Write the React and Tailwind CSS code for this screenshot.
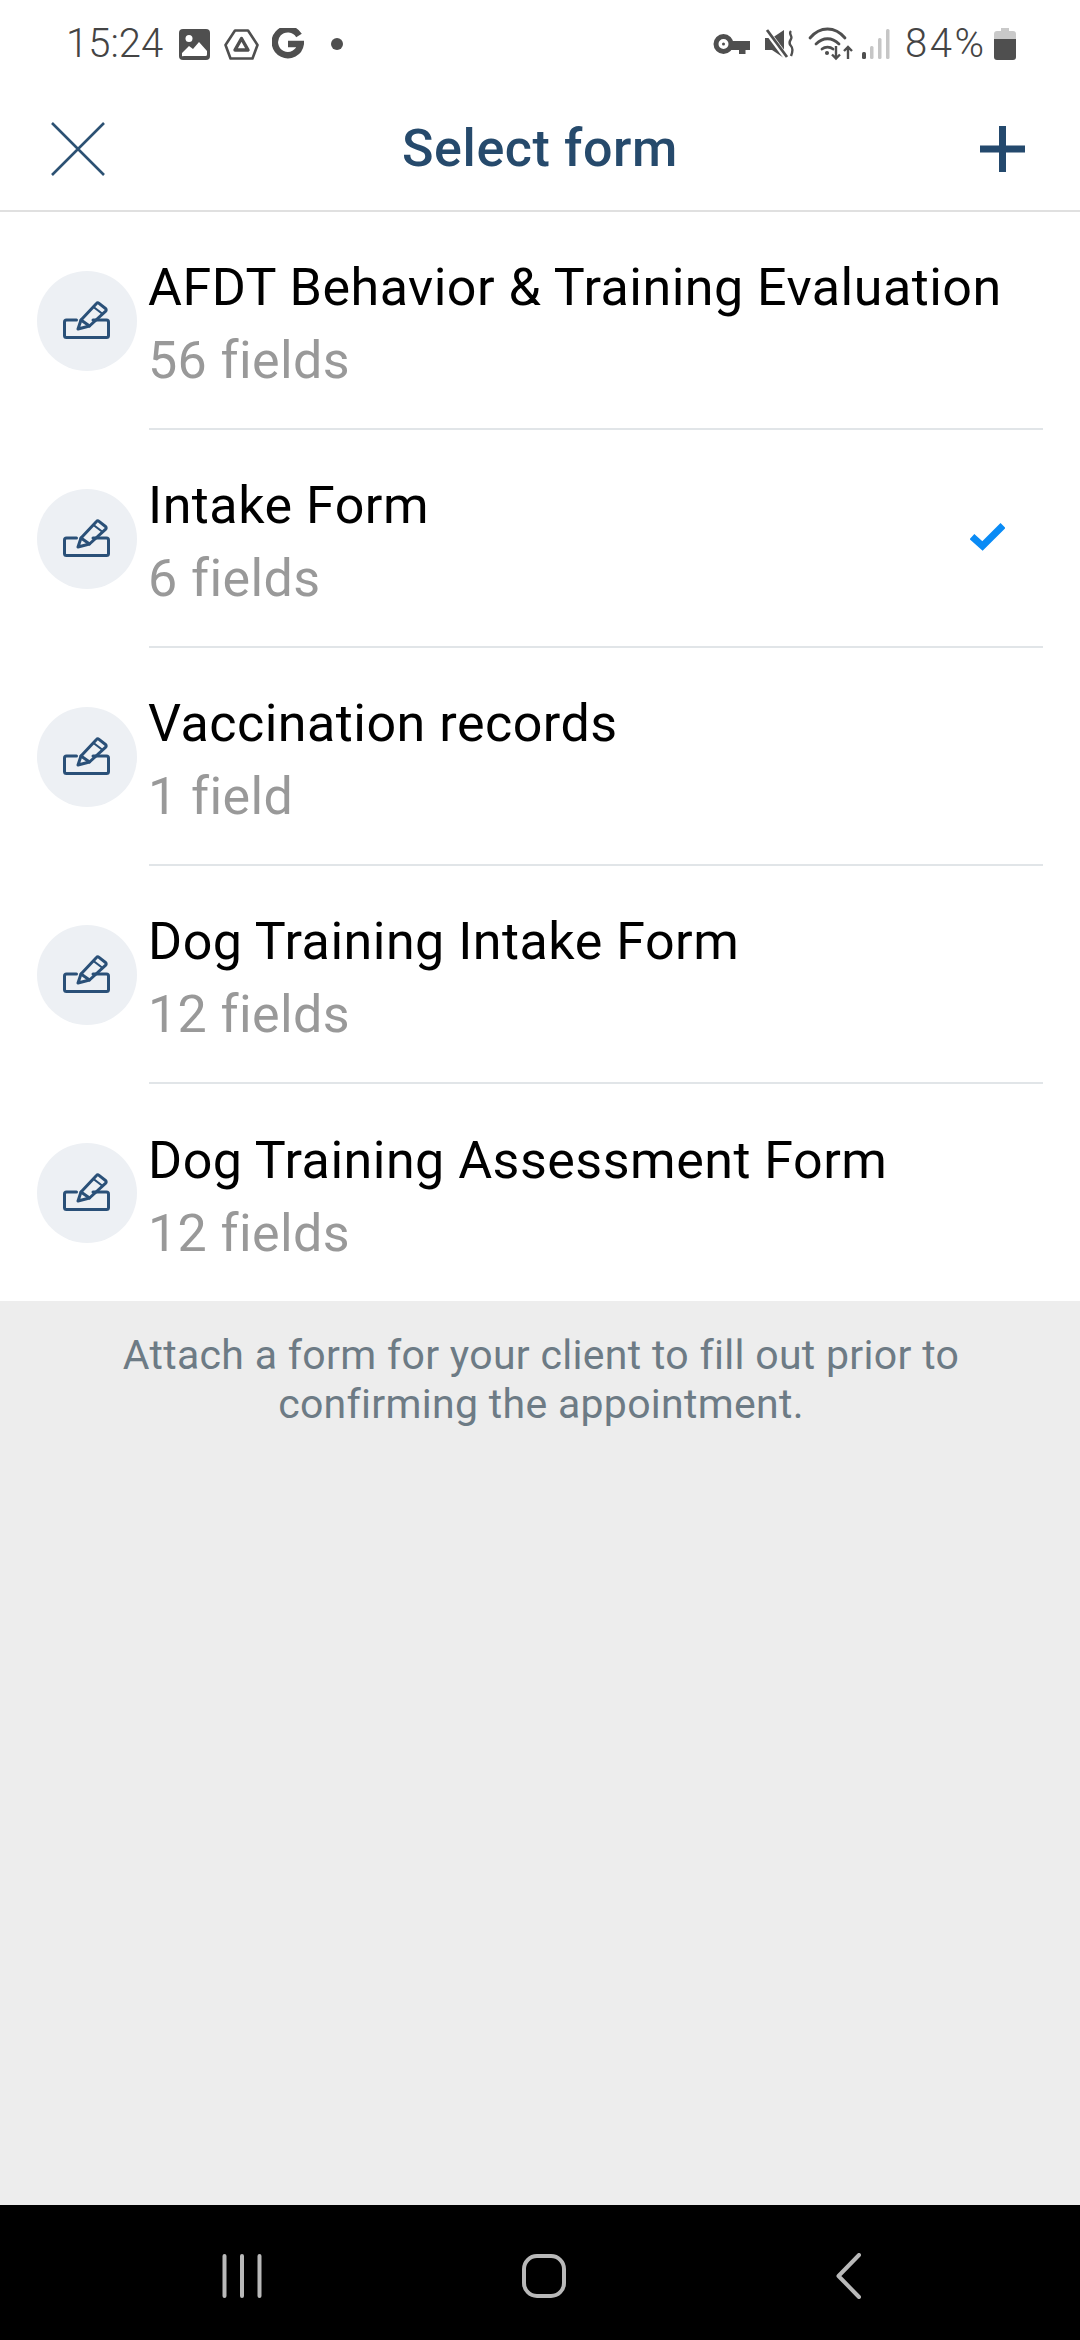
const forms = [
  { title: "AFDT Behavior & Training Evaluation", sub: "56 fields" },
  { title: "Intake Form", sub: "6 fields", selected: true },
  { title: "Vaccination records", sub: "1 field" },
  { title: "Dog Training Intake Form", sub: "12 fields" },
  { title: "Dog Training Assessment Form", sub: "12 fields" },
];

function FormIcon() {
  return (
    <svg className="mb-[3px] mr-[2px]" width="47" height="38" viewBox="0 0 47 38" fill="none" stroke="#2a5078" strokeWidth="3" strokeLinejoin="round" strokeLinecap="round">
      <path d="M13.5 19H3.5a2 2 0 0 0-2 2v13.500a2 2 0 0 0 2 2h40a2 2 0 0 0 2-2V21a2 2 0 0 0-2-2H30" />
      <path d="M15 28l3-9L33.500 2.500a1.800 1.800 0 0 1 2.500-.2l6.500 5.200a1.800 1.800 0 0 1 .2 2.600L26.500 25z" />
      <path d="M18 19l8.500 6" />
      <path d="M30.500 6l8.500 6.500" strokeWidth="2.200" />
    </svg>
  );
}

function StatusLeft() {
  return (
    <div className="flex items-center">
      <span className="text-[40px] leading-none font-light text-[#444444] w-[113px]">15:24</span>
      <svg width="31" height="31" viewBox="0 0 31 31">
        <rect width="31" height="31" rx="4" fill="#4f4f4f" />
        <circle cx="10" cy="9.5" r="3.5" fill="#fff" />
        <path d="M3 24l7-7 4 3 6-7 8 9v3.5a1.5 1.5 0 0 1-1.5 1.5h-22A1.5 1.5 0 0 1 3 27z" fill="#fff" />
      </svg>
      <svg className="ml-[14px]" width="35" height="31" viewBox="0 0 35 31" fill="none" stroke="#4f4f4f" strokeWidth="2.6" strokeLinejoin="round">
        <path d="M11 1.5h13l9.5 14.5-5 13.5H6.500L1.500 16z" />
        <path d="M17.500 9.500l6.500 11.500H11z" strokeWidth="3.400" />
      </svg>
      <svg className="ml-[13px]" width="32" height="32" viewBox="0 0 32 32" fill="none" stroke="#4f4f4f" strokeWidth="6.500">
        <path d="M27 7.500A13 13 0 1 0 28.700 16H16" />
      </svg>
      <span className="ml-[27px] w-[12px] h-[12px] rounded-full bg-[#4f4f4f]" />
    </div>
  );
}

function StatusRight() {
  return (
    <div className="flex items-center">
      <svg width="37" height="22" viewBox="0 0 37 22" fill="none">
        <circle cx="10.500" cy="11" r="7.500" stroke="#4f4f4f" strokeWidth="5" />
        <path d="M18 8h19v9h-4.500v4H26v-4h-8z" fill="#4f4f4f" />
        <circle cx="10.500" cy="11" r="1.500" fill="#4f4f4f" />
      </svg>
      <svg className="ml-[14px]" width="30" height="30" viewBox="0 0 30 30" fill="none">
        <path d="M1 9h7L20 1v28L8 21H1z" fill="#4f4f4f" />
        <path d="M2 1l20 27" stroke="#fff" strokeWidth="5.500" />
        <path d="M3 1l20 27" stroke="#4f4f4f" strokeWidth="2.800" />
        <path d="M27 2c-3 3 2 5 0 8s-2 5 0 7 2 5-0 10" stroke="#4f4f4f" strokeWidth="2.400" />
      </svg>
      <svg className="ml-[14px]" width="45" height="34" viewBox="0 0 45 34" fill="none" stroke="#4f4f4f" strokeWidth="2.800" strokeLinecap="round">
        <path d="M2 11C12 -1 27 -1 37 11" />
        <path d="M8 17c7-7 16-7 23 0" />
        <path d="M14 22c3-2.500 8-2.500 11 0" />
        <circle cx="19" cy="26" r="1.300" fill="#4f4f4f" strokeWidth="1.500" />
        <path d="M28 19v12M24 27.500l4 4 4-4M40 32V20M36 24l4-4 4 4" strokeWidth="2.400" strokeLinecap="butt" />
      </svg>
      <svg className="ml-[9px]" width="28" height="30" viewBox="0 0 28 30">
        <rect x="0" y="23" width="4" height="7" rx="1.500" fill="#4f4f4f" />
        <rect x="8" y="17" width="3.500" height="13" rx="1.500" fill="#c6c6c6" />
        <rect x="16" y="9" width="3.500" height="21" rx="1.500" fill="#c6c6c6" />
        <rect x="24" y="0" width="3.500" height="30" rx="1.500" fill="#c6c6c6" />
      </svg>
      <span className="ml-[15px] text-[40px] leading-none font-light tracking-[2.5px] text-[#444444] w-[89px]">84%</span>
      <svg width="22" height="32" viewBox="0 0 22 32">
        <path d="M7 0h8v3h4a3 3 0 0 1 3 3v5H0V6a3 3 0 0 1 3-3h4z" fill="#c9c9c9" />
        <path d="M0 11h22v18a3 3 0 0 1-3 3H3a3 3 0 0 1-3-3z" fill="#4f4f4f" />
      </svg>
    </div>
  );
}

function FormRow({ form, last }) {
  return (
    <div className="flex h-[218px] pl-[37px] pr-[37px]">
      <div className="flex items-center w-[112px] shrink-0">
        <div className="w-[100px] h-[100px] rounded-full bg-[#edf0f4] flex items-center justify-center">
          <FormIcon />
        </div>
      </div>
      <div className={`flex-1 flex items-center min-w-0 ${last ? "" : "border-b-2 border-[#e1e5e8]"}`}>
        <div className="flex-1 pt-[8px] -ml-[1px]">
          <div className="text-[52px] leading-[73px] tracking-[0.5px] text-black whitespace-nowrap">{form.title}</div>
          <div className="text-[52px] leading-[73px] tracking-[0.4px] text-[#999999] whitespace-nowrap">{form.sub}</div>
        </div>
        {form.selected && (
          <svg className="mr-[38px] mb-[2px]" width="35" height="28" viewBox="0 0 35 28" fill="none" stroke="#0a8bf5" strokeWidth="7">
            <path d="M2 13.500L12.500 23 33 2.500" />
          </svg>
        )}
      </div>
    </div>
  );
}

export default function App() {
  return (
    <div className="w-[1080px] h-[2340px] flex flex-col bg-[#ededed] font-['Roboto',sans-serif] overflow-hidden">
      <div className="bg-white">
        <div className="h-[88px] pl-[66px] pr-[64px] flex items-center justify-between">
          <StatusLeft />
          <StatusRight />
        </div>
        <div className="h-[124px] pl-[51px] pr-[55px] flex items-center justify-between border-b-2 border-[#e0e0e0]">
          <svg width="54" height="54" viewBox="0 0 54 54" stroke="#2c5173" strokeWidth="2.600">
            <path d="M1 1l52 52M53 1L1 53" />
          </svg>
          <span className="text-[52px] font-medium tracking-[0.6px] text-[#264a6c] -ml-[5px]">Select form</span>
          <svg width="45" height="46" viewBox="0 0 45 46" stroke="#24496d" strokeWidth="7">
            <path d="M22.500 0v46M0 23h45" />
          </svg>
        </div>
      </div>
      <div className="bg-white h-[1089px]">
        {forms.map((f, i) => (
          <FormRow key={f.title} form={f} last={i === forms.length - 1} />
        ))}
      </div>
      <div className="flex-1 pt-[30px] pl-[2px] text-center text-[41px] leading-[49px] text-[#6d7b85] tracking-[0.3px]">
        <div>Attach a form for your client to fill out prior to</div>
        <div>confirming the appointment.</div>
      </div>
      <div className="h-[135px] bg-black flex items-center">
        <svg className="ml-[222px] mt-[7px]" width="40" height="44" viewBox="0 0 40 44" stroke="#b9b9b9" strokeWidth="4" strokeLinecap="round">
          <path d="M2.500 2v40M20 2v40M37.500 2v40" />
        </svg>
        <svg className="ml-[260px] mt-[7px]" width="44" height="44" viewBox="0 0 44 44" fill="none" stroke="#b9b9b9" strokeWidth="4">
          <rect x="2" y="2" width="40" height="40" rx="13" />
        </svg>
        <svg className="ml-[270px] mt-[7px]" width="25" height="46" viewBox="0 0 25 46" fill="none" stroke="#b9b9b9" strokeWidth="4" strokeLinecap="round" strokeLinejoin="round">
          <path d="M23 2L2.500 23 23 44" />
        </svg>
      </div>
    </div>
  );
}
